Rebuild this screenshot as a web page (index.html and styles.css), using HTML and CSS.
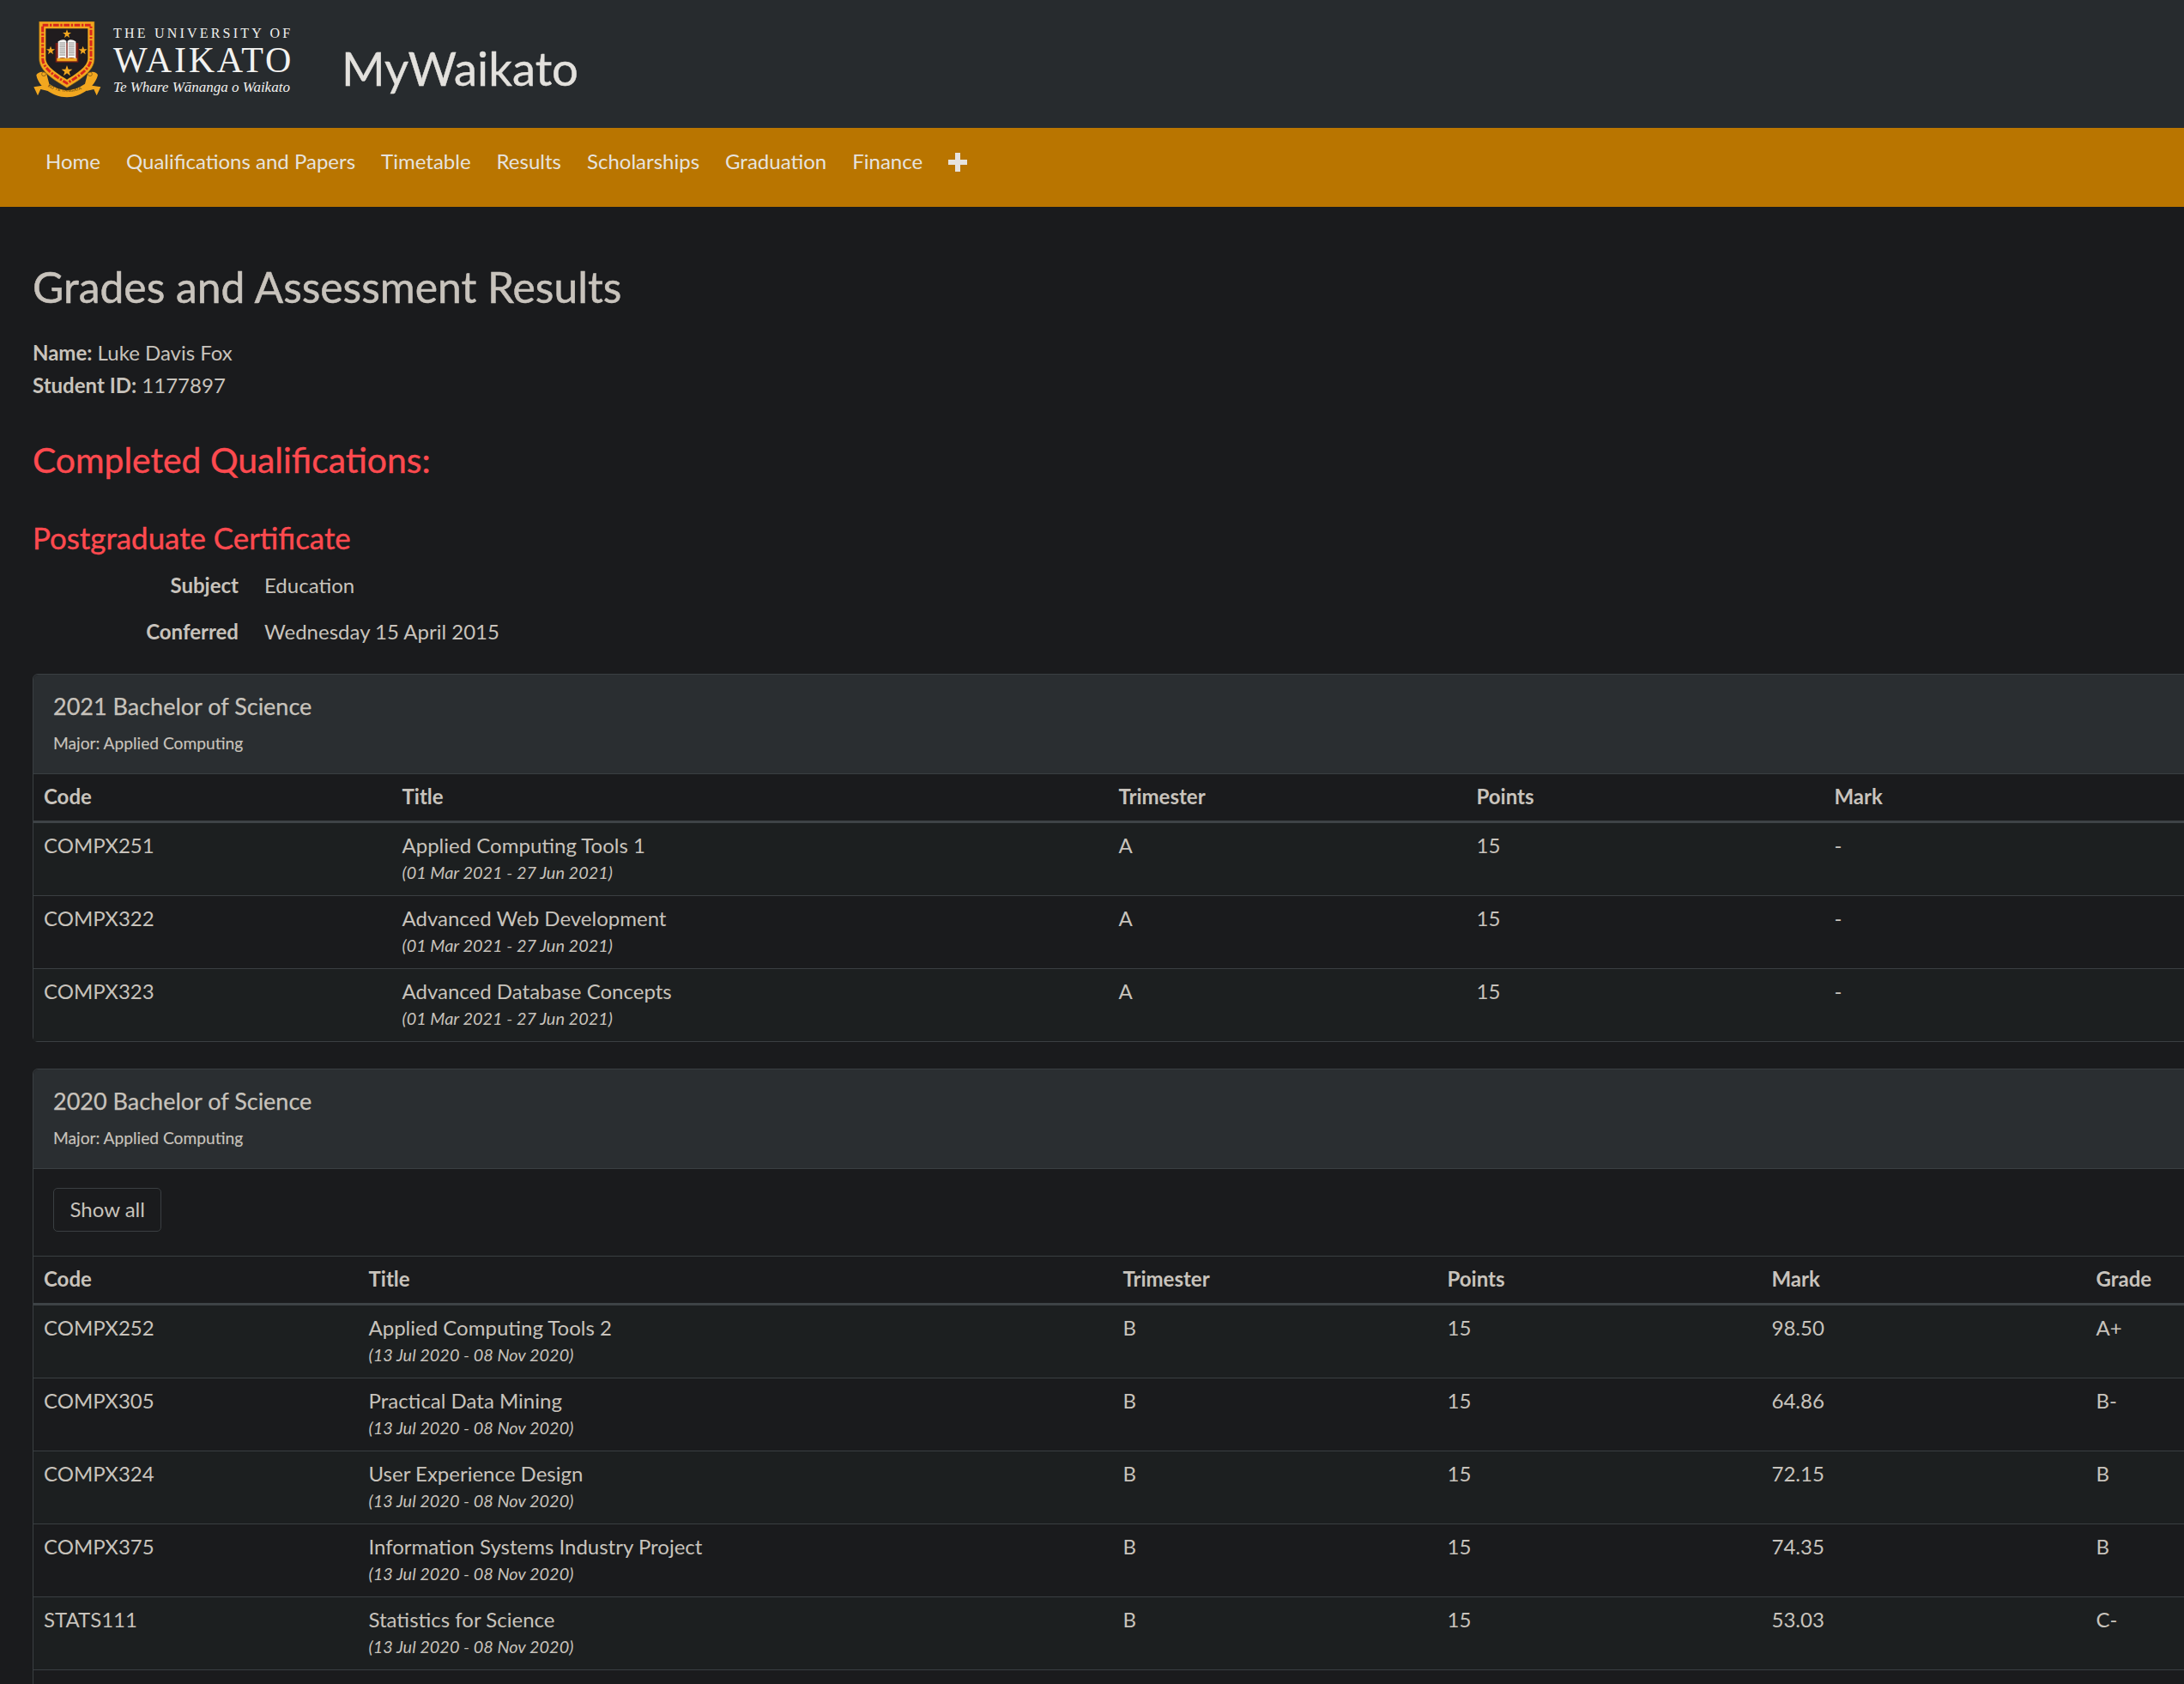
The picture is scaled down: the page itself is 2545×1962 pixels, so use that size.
FILE: index.html
```html
<!DOCTYPE html>
<html lang="en">
<head>
<meta charset="utf-8">
<title>MyWaikato</title>
<link rel="stylesheet" href="styles.css">
</head>
<body>
<header class="masthead">
  <div class="brand">
    <svg class="crest" viewBox="55 75 240 267" aria-hidden="true">
      <defs><path id="ribbon-arc" d="M92 296 Q172 346 258 296"/></defs>
      <path d="M65 262 C70 300 120 340 172 340 C225 340 272 300 280 262 C275 250 260 248 245 255 L235 293 C215 306 195 314 172 316 C150 314 130 306 110 293 L100 255 C88 248 72 250 65 262 Z" fill="#f2a71f"/>
      <path d="M56 304 L96 298 L106 318 L80 312 L70 334 Z M290 304 L250 298 L240 318 L266 312 L276 334 Z" fill="#f2a71f"/>
      <circle cx="91" cy="259" r="7" fill="none" stroke="#6b4a10" stroke-width="2"/>
      <circle cx="253" cy="259" r="7" fill="none" stroke="#6b4a10" stroke-width="2"/>
      <path d="M75 75 H268 V205 C268 250 215 280 172 307 C128 280 75 250 75 205 Z" fill="#f2a71f" stroke="#8a5f14" stroke-width="2"/>
      <path d="M87 88 H256 V205 C256 240 210 268 172 291 C134 268 87 240 87 205 Z" fill="none" stroke="#d8261c" stroke-width="9" stroke-dasharray="20 5 7 5"/>
      <path d="M98 100 H245 V205 C245 232 205 258 172 278 C138 258 98 232 98 205 Z" fill="#201c1e"/>
      <path d="M172 103 L176 114 H187 L178 121 L181 132 L172 125 L163 132 L166 121 L157 114 H168 Z" fill="#f2a71f"/>
      <path d="M115 161 L119 172 H130 L121 179 L124 190 L115 183 L106 190 L109 179 L100 172 H111 Z" fill="#f2a71f"/>
      <path d="M228 161 L232 172 H243 L234 179 L237 190 L228 183 L219 190 L222 179 L213 172 H224 Z" fill="#f2a71f"/>
      <path d="M172 228 L177 242 H191 L180 251 L184 265 L172 256 L160 265 L164 251 L153 242 H167 Z" fill="#f2a71f"/>
      <rect x="132" y="150" width="80" height="68" fill="#7a1d14"/>
      <rect x="137" y="203" width="70" height="11" fill="#f2a71f"/>
      <path d="M141 145 Q158 134 170 143 V205 Q158 197 141 205 Z M203 145 Q186 134 174 143 V205 Q186 197 203 205 Z" fill="#f4f4f1"/>
      <path d="M146 150 H166 M146 157 H166 M146 164 H166 M146 171 H166 M146 178 H166 M146 185 H166 M146 192 H166 M178 150 H198 M178 157 H198 M178 164 H198 M178 171 H198 M178 178 H198 M178 185 H198 M178 192 H198" stroke="#8a8a88" stroke-width="3"/>
      <text class="crest-motto"><textPath href="#ribbon-arc" startOffset="8%">KO TE TANGATA</textPath></text>
    </svg>
    <div class="wordmark">
      <div class="wm-top">THE UNIVERSITY OF</div>
      <div class="wm-main">WAIKATO</div>
      <div class="wm-sub">Te Whare Wānanga o Waikato</div>
    </div>
    <div class="site-name">MyWaikato</div>
  </div>
</header>
<nav class="navbar">
  <a class="nav-link">Home</a>
  <a class="nav-link">Qualifications and Papers</a>
  <a class="nav-link">Timetable</a>
  <a class="nav-link">Results</a>
  <a class="nav-link">Scholarships</a>
  <a class="nav-link">Graduation</a>
  <a class="nav-link">Finance</a>
  <svg class="nav-plus" viewBox="0 0 22 22" aria-hidden="true"><path d="M8 0 H14 V8 H22 V14 H14 V22 H8 V14 H0 V8 H8 Z"/></svg>
</nav>
<main class="content">
  <h1 class="page-title">Grades and Assessment Results</h1>
  <p class="identity"><strong>Name:</strong> Luke Davis Fox<br><strong>Student ID:</strong> 1177897</p>
  <h2 class="completed">Completed Qualifications:</h2>
  <h3 class="qual">Postgraduate Certificate</h3>
  <dl class="facts">
    <dt>Subject</dt><dd>Education</dd>
    <dt>Conferred</dt><dd>Wednesday 15 April 2015</dd>
  </dl>

  <section class="card">
    <div class="card-head">
      <div class="card-title">2021 Bachelor of Science</div>
      <div class="card-major">Major: Applied Computing</div>
    </div>
    <table class="results first">
      <thead><tr><th>Code</th><th>Title</th><th>Trimester</th><th>Points</th><th>Mark</th></tr></thead>
      <tbody>
        <tr><td>COMPX251</td><td>Applied Computing Tools 1<em>(01 Mar 2021 - 27 Jun 2021)</em></td><td>A</td><td>15</td><td>-</td></tr>
        <tr><td>COMPX322</td><td>Advanced Web Development<em>(01 Mar 2021 - 27 Jun 2021)</em></td><td>A</td><td>15</td><td>-</td></tr>
        <tr><td>COMPX323</td><td>Advanced Database Concepts<em>(01 Mar 2021 - 27 Jun 2021)</em></td><td>A</td><td>15</td><td>-</td></tr>
      </tbody>
    </table>
  </section>

  <section class="card">
    <div class="card-head">
      <div class="card-title">2020 Bachelor of Science</div>
      <div class="card-major">Major: Applied Computing</div>
    </div>
    <div class="card-tools"><button class="btn">Show all</button></div>
    <table class="results second">
      <thead><tr><th>Code</th><th>Title</th><th>Trimester</th><th>Points</th><th>Mark</th><th>Grade</th></tr></thead>
      <tbody>
        <tr><td>COMPX252</td><td>Applied Computing Tools 2<em>(13 Jul 2020 - 08 Nov 2020)</em></td><td>B</td><td>15</td><td>98.50</td><td>A+</td></tr>
        <tr><td>COMPX305</td><td>Practical Data Mining<em>(13 Jul 2020 - 08 Nov 2020)</em></td><td>B</td><td>15</td><td>64.86</td><td>B-</td></tr>
        <tr><td>COMPX324</td><td>User Experience Design<em>(13 Jul 2020 - 08 Nov 2020)</em></td><td>B</td><td>15</td><td>72.15</td><td>B</td></tr>
        <tr><td>COMPX375</td><td>Information Systems Industry Project<em>(13 Jul 2020 - 08 Nov 2020)</em></td><td>B</td><td>15</td><td>74.35</td><td>B</td></tr>
        <tr><td>STATS111</td><td>Statistics for Science<em>(13 Jul 2020 - 08 Nov 2020)</em></td><td>B</td><td>15</td><td>53.03</td><td>C-</td></tr>
        <tr><td>COMPX361</td><td>Introduction to Computing<em>(13 Jul 2020 - 08 Nov 2020)</em></td><td>B</td><td>15</td><td>71.00</td><td>B</td></tr>
      </tbody>
    </table>
  </section>
</main>
</body>
</html>
```
FILE: styles.css
```css
html, body { margin: 0; padding: 0; }
html { height: 1962px; overflow: hidden; }
body {
  width: 2545px;
  height: 1962px;
  overflow: hidden;
  background: #1a1b1d;
  color: #c8c3bc;
  font-family: Lato, "Noto Sans", sans-serif;
  font-size: 24px;
  line-height: 1.5;
  text-rendering: optimizeLegibility;
}
.masthead { height: 149px; background: #272b2e; box-sizing: border-box; padding: 25px 0 0 39px; }
.brand { display: flex; align-items: flex-start; }
.crest { width: 80px; height: 89px; display: block; }
.crest-motto { font-family: "Liberation Sans", sans-serif; font-size: 15px; fill: #3a2a08; letter-spacing: 0.6px; }
.wordmark { margin-left: 13px; width: 208px; color: #f2f2f0; font-family: "Liberation Serif", serif; line-height: 1; white-space: nowrap; }
.wm-top { font-size: 16px; letter-spacing: 3.2px; margin-top: 6px; height: 16px; }
.wm-main { font-size: 42px; letter-spacing: 2.8px; height: 41px; margin-top: 2px; }
.wm-sub { font-size: 17px; font-style: italic; margin-top: 3px; }
.site-name { margin-left: 58px; margin-top: 22px; font-size: 54.6px; font-weight: 400; line-height: 65px; color: #e3e1dd; -webkit-text-stroke: 0.4px currentColor; }
.navbar { height: 92px; background: #b97500; box-sizing: border-box; padding: 21px 38px 0 53px; display: flex; align-items: flex-start; gap: 30px; }
.nav-link { color: #e6e3df; font-size: 24px; line-height: 36px; white-space: nowrap; }
.nav-plus { width: 22px; height: 22px; margin: 8px 0 0 0; fill: #e6e3df; }
.content { padding: 0 0 0 38px; width: 2960px; box-sizing: border-box; }
.page-title { margin: 0; padding-top: 63px; font-size: 49.8px; font-weight: 400; line-height: 60px; color: #c8c3bc; -webkit-text-stroke: 0.5px currentColor; }
.identity { margin: 28px 0 0; line-height: 38px; }
.identity strong { font-weight: 700; }
.completed { margin: 43px 0 0; font-size: 40.85px; font-weight: 400; line-height: 49px; color: #ff4a4f; -webkit-text-stroke: 0.4px currentColor; }
.qual { margin: 46px 0 0; font-size: 34.85px; font-weight: 400; line-height: 42px; color: #ff4a4f; -webkit-text-stroke: 0.4px currentColor; }
.facts { margin: 16px 0 0; display: grid; grid-template-columns: 240px 1fr; column-gap: 30px; row-gap: 17.5px; line-height: 36px; }
.facts dt { font-weight: 700; text-align: right; }
.facts dd { margin: 0; }
.card { margin-top: 31px; border: 1px solid #3a3f42; border-radius: 6px; width: 2920px; }
.card-head { background: #2a2e31; border-bottom: 1px solid #3a3f42; padding: 18px 23px 0; border-radius: 6px 6px 0 0; height: 116px; box-sizing: border-box; }
.card-title { font-size: 27px; line-height: 38px; -webkit-text-stroke: 0.25px currentColor; }
.card-major { font-size: 19.2px; line-height: 28px; margin-top: 10px; -webkit-text-stroke: 0.15px currentColor; }
.card-tools { padding: 22px 23px 28px; border-bottom: 1px solid #3a3f42; }
.btn { display: block; height: 51px; padding: 0 18.5px; background: transparent; border: 1px solid #3a3f42; border-radius: 5px; color: #c8c3bc; font: inherit; }
.results { border-collapse: separate; border-spacing: 0; table-layout: fixed; width: 2918px; }
.results th, .results td { box-sizing: border-box; text-align: left; }
.results th { font-weight: 700; padding: 8px 12px 10px; line-height: 36px; border-bottom: 3px solid #3e4346; }
.results td { padding: 10px 12px 0; vertical-align: top; line-height: 32px; border-bottom: 1px solid #3a3f42; height: 85px; }
.results tr:nth-child(odd) td { background: #1c1f20; }
.results tr:last-child td { border-bottom: 0; height: 84px; }
.results td em { display: block; font-size: 19.9px; line-height: 30px; }
.first th:nth-child(1) { width: 417.5px; }
.first th:nth-child(2) { width: 835px; }
.first th:nth-child(3), .first th:nth-child(4) { width: 417px; }
.second th:nth-child(1) { width: 378.5px; }
.second th:nth-child(2) { width: 879px; }
.second th:nth-child(n+3) { width: 378px; }
.second { width: 2769.5px; }
```
